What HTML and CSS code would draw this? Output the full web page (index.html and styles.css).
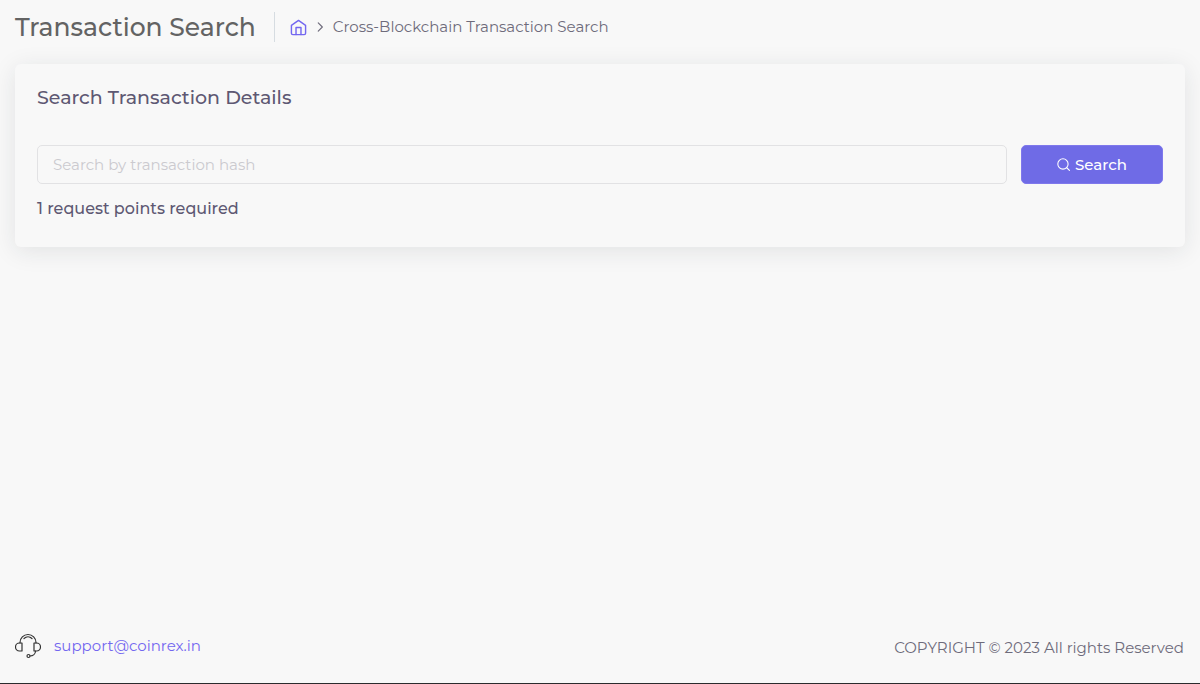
FILE: index.html
```html
<!DOCTYPE html>
<html lang="en">
<head>
<meta charset="utf-8">
<meta name="viewport" content="width=device-width, initial-scale=1">
<title>Transaction Search</title>
<link rel="stylesheet" href="styles.css">
</head>
<body>
<header class="page-header">
  <h1 class="page-title">Transaction Search</h1>
  <nav class="breadcrumb" aria-label="Breadcrumb">
    <a class="home-link" href="#" aria-label="Home">
      <svg class="icon-home" viewBox="0 0 24 24" aria-hidden="true"><path d="M2 9l10-7 10 7v11a2 2 0 0 1-2 2H4a2 2 0 0 1-2-2z"/><path d="M8.500 22V12h7v10"/></svg>
    </a>
    <svg class="icon-chevron" viewBox="0 0 24 24" aria-hidden="true"><path d="M9 19l7-7-7-7"/></svg>
    <span>Cross-Blockchain Transaction Search</span>
  </nav>
</header>
<main class="content">
  <section class="card">
    <h2 class="card-title">Search Transaction Details</h2>
    <form class="search-form">
      <input class="search-input" type="text" placeholder="Search by transaction hash" aria-label="Transaction hash">
      <button class="search-button" type="button">
        <svg class="icon-search" viewBox="0 0 24 24" aria-hidden="true"><circle cx="11" cy="11" r="9.500"/><path d="M23 23l-5-5"/></svg>
        <span>Search</span>
      </button>
    </form>
    <p class="points">1 request points required</p>
  </section>
</main>
<footer class="page-footer">
  <a class="support" href="mailto:support@coinrex.in">
    <svg class="icon-headset" viewBox="0 0 26 26" aria-hidden="true"><path d="M5 10V9.500a8 8 0 0 1 16 0v.5"/><path d="M9 5.500a6 6 0 0 1 8 0"/><path d="M7 10H4.500a3.500 3.500 0 0 0 0 8H7zM19 10h2.500a3.500 3.500 0 0 1 0 8H19z"/><path d="M20.500 18c0 3-2.500 5-5.500 5"/><circle cx="13.500" cy="23" r="1.500"/></svg>
    <span>support@coinrex.in</span>
  </a>
  <span class="copyright">COPYRIGHT © 2023 All rights Reserved</span>
</footer>
</body>
</html>
```
FILE: styles.css
```css
* {
  box-sizing: border-box;
}

body {
  display: flex;
  flex-direction: column;
  min-height: 100vh;
  margin: 0;
  border-bottom: 1px solid #2b2b2d;
  background: #f8f8f8;
  color: #6e6b7b;
  font-family: Montserrat, Inter, "Open Sans", sans-serif;
  font-size: 15px;
  line-height: 22px;
}

svg {
  display: block;
  flex: none;
  fill: none;
  stroke: currentColor;
  stroke-width: 2;
  stroke-linecap: round;
  stroke-linejoin: round;
}

.page-header {
  display: flex;
  flex-wrap: wrap;
  align-items: center;
  gap: 18px;
  padding: 12px 15px 0;
}

.page-title {
  margin: 0;
  color: #636363;
  font-size: 25px;
  font-weight: 500;
  line-height: 30px;
}

.breadcrumb {
  display: flex;
  align-items: center;
  min-height: 30px;
  padding-left: 15px;
  border-left: 1px solid #d6dce1;
}

.home-link {
  color: #7367f0;
}

.icon-home {
  width: 17px;
  height: 17px;
}

.icon-chevron {
  width: 14px;
  height: 14px;
  margin: 0 6px;
}

.content {
  flex: 1;
  padding: 22px 15px;
}

.card {
  padding: 22px;
  border-radius: 6px;
  background: #f8f8f8;
  box-shadow: 0 4px 24px rgba(34, 41, 47, 0.1);
}

.card-title {
  margin: 0 0 36px;
  color: #5e5873;
  font-size: 19px;
  font-weight: 500;
  line-height: 23px;
}

.search-form {
  display: flex;
  gap: 14px;
}

.search-input {
  flex: 1;
  min-width: 0;
  height: 39px;
  padding: 0 15px;
  border: 1px solid #e2e2e4;
  border-radius: 5px;
  background: transparent;
  color: #6e6b7b;
  font: inherit;
}

.search-input::placeholder {
  color: #cbcacf;
  opacity: 1;
}

.search-button {
  display: flex;
  align-items: center;
  justify-content: center;
  gap: 5px;
  flex: 0 0 142px;
  height: 39px;
  border: 1px solid #7f78ec;
  border-radius: 5px;
  background: #6f6be6;
  color: #fff;
  font: inherit;
  font-weight: 500;
}

.icon-search {
  width: 13px;
  height: 13px;
}

.points {
  margin: 14px 0 5px;
  color: #5e5873;
  font-size: 16px;
  font-weight: 500;
}

.page-footer {
  display: flex;
  flex-wrap: wrap;
  align-items: flex-end;
  justify-content: space-between;
  padding: 0 16px 24px 15px;
}

.support {
  display: flex;
  align-items: center;
  gap: 13px;
  color: #7367f0;
  text-decoration: none;
}

.icon-headset {
  width: 26px;
  height: 26px;
  color: #333;
  stroke-width: 1.2;
}
```
